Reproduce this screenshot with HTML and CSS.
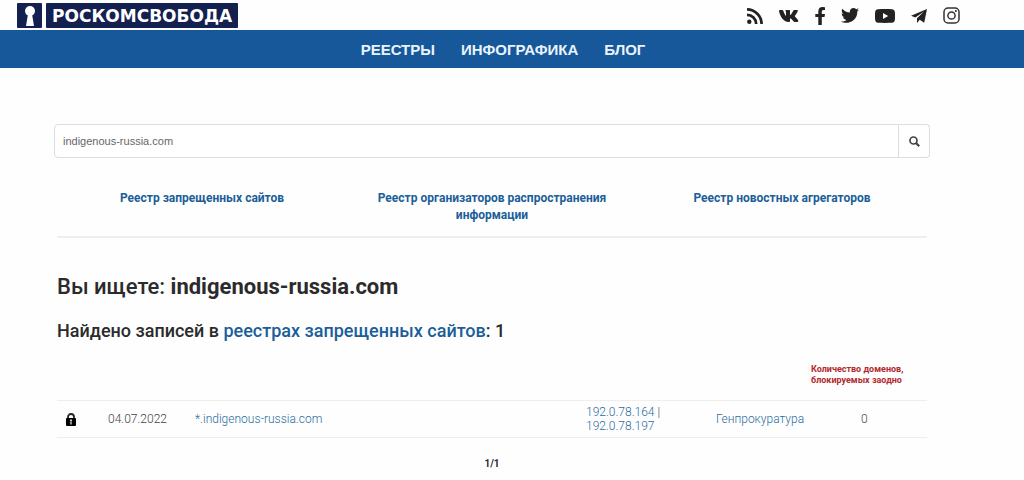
FILE: index.html
```html
<!DOCTYPE html>
<html lang="ru">
<head>
    <meta charset="UTF-8">
    <meta name="viewport" content="width=device-width, initial-scale=1.0">
    <title>Роскомсвобода</title>
    <link rel="stylesheet" href="styles.css">
</head>
<body>

    <header class="header">
        <a class="logo" href="#">
            <span class="logo-mark">
                <svg width="12" height="20" viewBox="0 0 12 20"><circle cx="6" cy="5" r="5"/><path d="M4 8h4l2 12H2z"/></svg>
            </span>
            <span class="logo-text">РОСКОМСВОБОДА</span>
        </a>
        <div class="social">
            <a href="#" aria-label="RSS">
                <svg width="16" height="16" viewBox="0 0 16 16"><circle cx="2.3" cy="13.7" r="2.2"/><path d="M0 6.8a9.2 9.2 0 0 1 9.2 9.2M0 1.4A14.6 14.6 0 0 1 14.6 16" fill="none" stroke="#222" stroke-width="2.7"/></svg>
            </a>
            <a href="#" aria-label="VK">
                <svg width="20" height="12" viewBox="0 0 20 12"><path d="M0 .7C0 .2.3 0 .8 0h2.5c.5 0 .8.3 1 .8C5 3 6.2 5.4 7 6V2.200C7 1.200 6.600.9 6 .7 6.300.2 7 0 8 0h2c.7 0 1 .4 1 1v4.300c1.300-.8 2.500-2.800 3.200-4.500.2-.5.5-.8 1-.8H18c.8 0 1 .4.800 1-.5 1.700-2.200 3.900-3.100 5 .2.600 2.500 2.400 3.400 4.300.4.900.1 1.700-.8 1.700h-2.500c-.7 0-1-.4-1.500-1-.9-1-2.100-2.400-3.300-2.700v2.500c0 .8-.4 1.200-1.300 1.200C5 12 .9 6.700 0 .7z"/></svg>
            </a>
            <a href="#" aria-label="Facebook">
                <svg width="10" height="18" viewBox="0 0 10 18"><path d="M9.500 10.100l.5-3.200H6.800V4.800c0-.9.400-1.700 1.800-1.700H10V.3S8.700 0 7.500 0C5 0 3.300 1.500 3.300 4.400v2.500H.3v3.200h3V18h3.500v-7.900z"/></svg>
            </a>
            <a href="#" aria-label="Twitter">
                <svg width="18" height="15" viewBox="0 0 18 15"><path d="M16.200 3.700c.7 8.300-9.500 14-16.200 9.700 2 .2 3.900-.4 5.400-1.500-1.700-.1-3-1.200-3.400-2.600.6.100 1.100.1 1.600-.1C1.800 8.800.7 7.400.7 5.500c.5.300 1.100.5 1.700.5C.7 4.700.3 2.500 1.300.7c1.900 2.300 4.600 3.700 7.600 3.800C8.300 1.900 10.300 0 12.500 0c1.100 0 2 .4 2.700 1.200.8-.2 1.600-.5 2.300-.9-.300.900-.900 1.600-1.600 2 .7-.1 1.400-.3 2.100-.6-.500.800-1.100 1.400-1.800 2z"/></svg>
            </a>
            <a href="#" aria-label="YouTube">
                <svg width="20" height="14" viewBox="0 0 20 14"><path fill-rule="evenodd" d="M3 .2C7 0 13 0 17 .2c1.500.1 2.500 1 2.800 2.500.3 2.600.3 6 0 8.600-.3 1.500-1.300 2.400-2.800 2.500-4 .2-10 .2-14 0C1.500 13.700.5 12.800.2 11.300c-.3-2.600-.3-6 0-8.600C.5 1.200 1.500.3 3 .2zM8 4v6l5.200-3z"/></svg>
            </a>
            <a href="#" aria-label="Telegram">
                <svg width="16" height="14" viewBox="0 0 16 14"><path d="M16 0L0 6.800l4.300 1.600L13 2.500 6 9.200V14l2.700-3.200 4.500 3z"/></svg>
            </a>
            <a href="#" aria-label="Instagram">
                <svg width="17" height="17" viewBox="0 0 17 17"><g fill="none" stroke="#333" stroke-width="1.500"><rect x="1" y="1" width="15" height="15" rx="4"/><circle cx="8.500" cy="8.500" r="3.600"/></g><circle cx="12.900" cy="4.100" r="1"/></svg>
            </a>
        </div>
    </header>

    <nav class="menu">
        <a href="#">РЕЕСТРЫ</a>
        <a href="#">ИНФОГРАФИКА</a>
        <a href="#">БЛОГ</a>
    </nav>

    <main class="container">
        <!-- Поиск -->
        <form class="search">
            <input type="text" class="search-input" aria-label="Поиск" value="indigenous-russia.com">
            <button type="submit" class="search-button" aria-label="Найти">
                <svg width="11" height="11" viewBox="0 0 11 11"><circle cx="4.500" cy="4.500" r="3.500" fill="none" stroke="#444" stroke-width="1.700"/><path d="M7 7l3.200 3.200" stroke="#444" stroke-width="2.200"/></svg>
            </button>
        </form>

        <!-- Реестры -->
        <div class="registries">
            <a href="#">Реестр запрещенных сайтов</a>
            <a href="#">Реестр организаторов распространения информации</a>
            <a href="#">Реестр новостных агрегаторов</a>
        </div>

        <h1>Вы ищете: <strong>indigenous-russia.com</strong></h1>
        <h2>Найдено записей в <a href="#">реестрах запрещенных сайтов</a>: 1</h2>

        <table class="results">
            <thead>
                <tr>
                    <td class="col-icon"></td>
                    <td class="col-date"></td>
                    <td class="col-domain"></td>
                    <td class="col-ip"></td>
                    <td class="col-organ"></td>
                    <th class="col-count">Количество доменов, блокируемых заодно</th>
                </tr>
            </thead>
            <tbody>
                <tr>
                    <td class="lock">
                        <svg width="10" height="13" viewBox="0 0 10 13"><path d="M2 6V4a3 3 0 0 1 6 0v2" fill="none" stroke="#222" stroke-width="1.800"/><rect y="5" width="10" height="8" rx="1"/><path d="M4 6.500h2v2H4zM4.300 9h1.400v2.500H4.300z" fill="#ccc"/></svg>
                    </td>
                    <td>04.07.2022</td>
                    <td><a href="#">*.indigenous-russia.com</a></td>
                    <td><a href="#">192.0.78.164</a> |<br><a href="#">192.0.78.197</a></td>
                    <td><a href="#">Генпрокуратура</a></td>
                    <td class="count">0</td>
                </tr>
            </tbody>
        </table>

        <p class="pages">1/1</p>
    </main>

</body>
</html>
```
FILE: styles.css
```css
* {
    box-sizing: border-box;
}
body {
    margin: 0;
    background: #fefefe;
    font-family: Roboto, "Liberation Sans", sans-serif;
    color: #2b2b2b;
}
a {
    color: #1b5e99;
    text-decoration: none;
}
svg {
    display: block;
}
.header {
    display: flex;
    justify-content: space-between;
    height: 30px;
    padding: 3px 64px 2px 17px;
}
.logo {
    display: flex;
    gap: 4px;
}
.logo-mark, .logo-text {
    display: flex;
    align-items: center;
    justify-content: center;
    background: #14204f;
    border-radius: 1px;
    color: #fff;
}
.logo-mark {
    width: 25px;
    fill: #fff;
}
.logo-text {
    padding: 0 6px;
    font: bold 17px "DejaVu Sans", sans-serif;
}
.social {
    display: flex;
    align-items: center;
    gap: 16px;
    fill: #222;
}
.menu {
    display: flex;
    justify-content: center;
    align-items: center;
    gap: 26px;
    height: 38px;
    padding-right: 18px;
    background: #17589b;
}
.menu a {
    color: #e9f3fb;
    font: bold 15px "Liberation Sans", sans-serif;
}
.container {
    padding: 56px 97px 0 57px;
}
.search {
    display: flex;
    height: 34px;
    margin: 0 -3px;
}
.search-input {
    flex: 1;
    padding: 0 8px;
    border: 1px solid #ddd;
    border-radius: 4px 0 0 4px;
    background: #fff;
    font: 11px "Liberation Sans", sans-serif;
    color: #666;
}
.search-button {
    display: flex;
    align-items: center;
    justify-content: center;
    width: 31px;
    padding: 0;
    border: 1px solid #ddd;
    border-left: none;
    border-radius: 0 4px 4px 0;
    background: #fff;
    cursor: pointer;
}
.registries {
    display: flex;
    padding: 32px 0 12px;
    border-bottom: 2px solid #eee;
}
.registries a {
    flex: 1;
    padding: 0 20px;
    font-size: 12px;
    font-weight: bold;
    line-height: 17px;
    text-align: center;
}
h1 {
    margin: 36px 0 0;
    font-size: 22px;
    font-weight: 500;
    line-height: 26px;
}
h1 strong {
    font-weight: bold;
}
h2 {
    margin: 20px 0 0;
    font-size: 18px;
    font-weight: 500;
    line-height: 22px;
}
.results {
    width: 100%;
    margin-top: 22px;
    border-collapse: collapse;
    table-layout: fixed;
    font-size: 12px;
    font-weight: 300;
    line-height: 14px;
    color: #444;
}
.results th {
    padding: 0 0 14px;
    font-size: 9px;
    font-weight: bold;
    line-height: 11px;
    text-align: left;
    color: #b3282d;
}
.results tbody td {
    height: 37px;
    padding: 0;
    border-top: 1px solid #eee;
    border-bottom: 1px solid #eee;
}
.results a {
    color: #2a6c9e;
}
.col-icon {
    width: 51px;
}
.col-date {
    width: 87px;
}
.col-ip {
    width: 130px;
}
.col-organ {
    width: 95px;
}
.col-count {
    width: 116px;
}
.results .lock {
    padding-left: 9px;
}
.results .count {
    padding-left: 50px;
}
.pages {
    margin: 19px 0 0;
    font-size: 10px;
    font-weight: bold;
    line-height: 14px;
    text-align: center;
}
```
